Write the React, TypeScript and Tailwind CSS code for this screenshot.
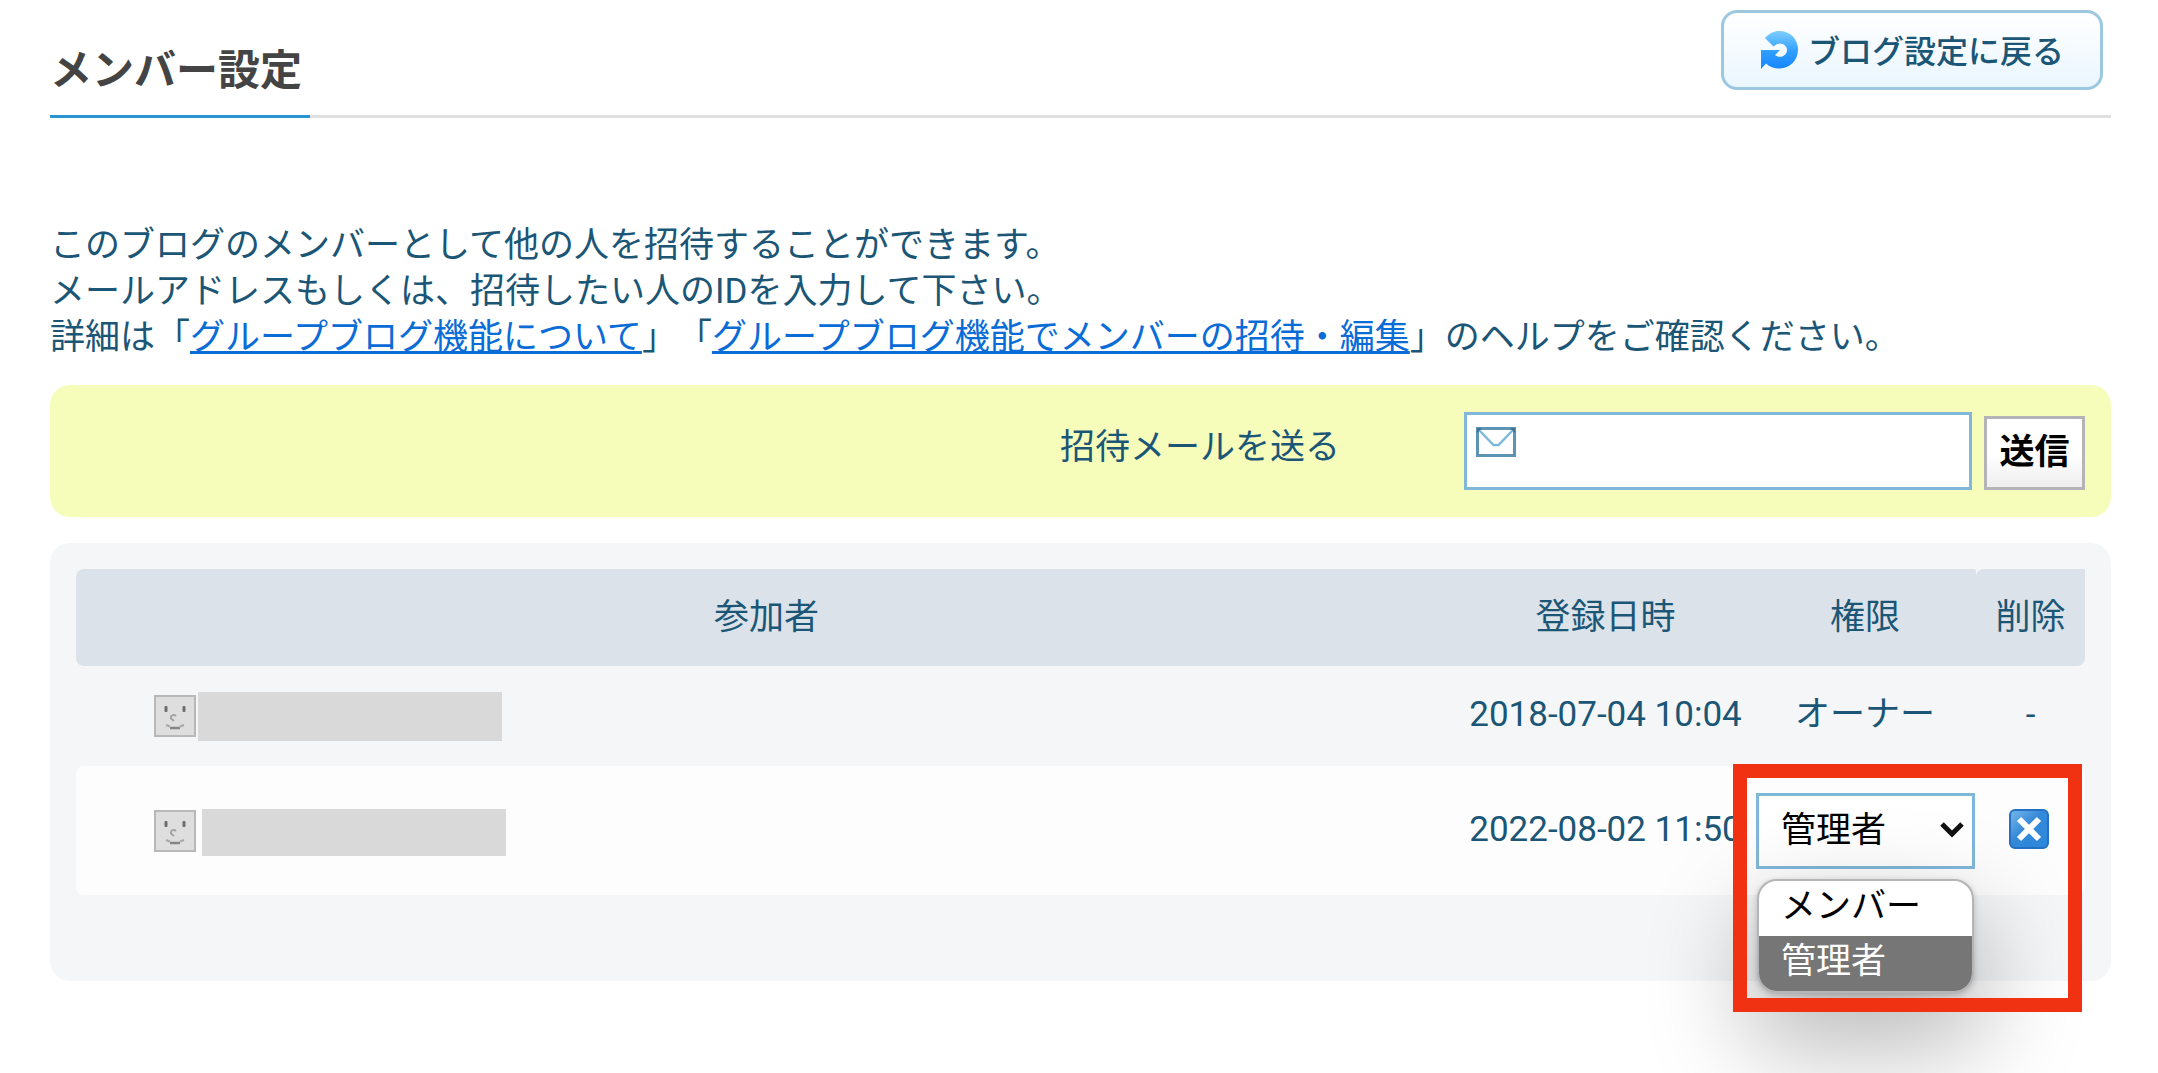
import { useState } from "react";

type Role = "member" | "admin";

const roles: { value: Role; label: string }[] = [
  { value: "member", label: "メンバー" },
  { value: "admin", label: "管理者" },
];

function BackIcon() {
  return (
    <svg width="38" height="38" viewBox="0 0 38 38" aria-hidden="true">
      <defs>
        <linearGradient id="back" x1="0" y1="0" x2="0" y2="1">
          <stop offset="0" stopColor="#7fcfff" />
          <stop offset="0.55" stopColor="#2f9dff" />
          <stop offset="1" stopColor="#1486ff" />
        </linearGradient>
      </defs>
      <path
        fill="url(#back)"
        d="M5 7C9 2.500 14 0 19.500 0C30 0 38 8 38 18.500C38 29 30 37.500 19.500 37.500C14 37.500 9.500 36 6 32.500L1 38V19H20L15 24C16.500 25.200 18 25.800 20 25.800C24 25.800 27 22.500 27 19C27 15.500 24 12.500 20 12.500C17.500 12.500 15.500 13.500 13.500 15.500Z"
      />
    </svg>
  );
}

function MailIcon() {
  return (
    <svg width="40" height="30" viewBox="0 0 40 30" aria-hidden="true">
      <defs>
        <linearGradient id="mail" x1="0" y1="0" x2="0" y2="1">
          <stop offset="0.5" stopColor="#ffffff" />
          <stop offset="1" stopColor="#e6e9ec" />
        </linearGradient>
      </defs>
      <rect x="1.500" y="1.500" width="37" height="27" fill="url(#mail)" stroke="#5d93b3" strokeWidth="3" />
      <path d="M3 3L17.500 18H22.500L37 3" fill="none" stroke="#7fb9da" strokeWidth="2.500" />
      <path d="M1 1H6L1 6ZM39 1H34L39 6Z" fill="#3f7695" />
    </svg>
  );
}

function FaceIcon() {
  return (
    <svg width="42" height="42" viewBox="0 0 42 42" className="shrink-0" aria-hidden="true">
      <rect x="1" y="1" width="40" height="40" fill="#dedede" stroke="#b8b8b8" strokeWidth="2" />
      <rect x="10.500" y="11" width="3" height="6" rx="1" fill="#6e6e6e" />
      <rect x="28.500" y="11" width="3" height="6" rx="1" fill="#6e6e6e" />
      <path d="M22 21C20 19 16.500 20 17 23.500L20 26" fill="none" stroke="#a4a4a4" strokeWidth="2" />
      <path d="M12 30L16 31.500M26 31.500L30 30" fill="none" stroke="#a8a8a8" strokeWidth="2" />
      <path d="M16 33H26" fill="none" stroke="#858585" strokeWidth="2.500" />
    </svg>
  );
}

function DeleteIcon() {
  return (
    <svg width="40" height="40" viewBox="0 0 40 40" aria-hidden="true">
      <defs>
        <linearGradient id="delete" x1="0" y1="0" x2="1" y2="1">
          <stop offset="0" stopColor="#79b8ea" />
          <stop offset="0.45" stopColor="#3489d8" />
          <stop offset="1" stopColor="#2b87dc" />
        </linearGradient>
      </defs>
      <rect x="1" y="1" width="38" height="38" rx="5" fill="url(#delete)" stroke="#2470c4" strokeWidth="2" />
      <path d="M10 10L30 30M30 10L10 30" stroke="#ffffff" strokeWidth="6" />
    </svg>
  );
}

export default function App() {
  const [mail, setMail] = useState("");
  const [role, setRole] = useState<Role>("admin");

  return (
    <main className="min-h-screen overflow-hidden bg-white pt-[10px] pr-[47px] pb-20 pl-[50px] font-['Roboto','Noto_Sans_CJK_JP',sans-serif] text-[35px] leading-[46px] text-[#1b5676]">
      {/* Page title */}
      <header className="flex items-stretch">
        <h1 className="w-[260px] border-b-3 border-[#2a93d1] pt-[34px] text-[42px] leading-[54px] font-bold whitespace-nowrap text-[#444444]">
          メンバー設定
        </h1>
        <div className="flex flex-1 justify-end border-b-3 border-[#e0e0e0] pr-2 pb-[25px]">
          <a
            href="#settings"
            className="flex h-20 items-center gap-2.5 rounded-2xl border-3 border-[#9cc7e0] bg-linear-to-b from-white to-[#eaf6ff] pr-9 pl-9 text-[32px] font-medium"
          >
            <BackIcon />
            <span className="pt-1">ブログ設定に戻る</span>
          </a>
        </div>
      </header>

      <p className="mt-[105px] [text-spacing-trim:space-all]">
        このブログのメンバーとして他の人を招待することができます。
        <br />
        メールアドレスもしくは、招待したい人のIDを入力して下さい。
        <br />
        詳細は「
        <a href="#about" className="text-[#0a6cd6] underline">
          グループブログ機能について
        </a>
        」「
        <a href="#invite" className="text-[#0a6cd6] underline">
          グループブログ機能でメンバーの招待・編集
        </a>
        」のヘルプをご確認ください。
      </p>

      {/* Invitation */}
      <form
        className="mt-6 flex items-end justify-end gap-3 rounded-[20px] bg-[#f6fdbb] px-[26px] py-[27px]"
        onSubmit={(e) => e.preventDefault()}
      >
        <label htmlFor="mail" className="mr-28 self-center pb-1.5">
          招待メールを送る
        </label>
        <div className="relative">
          <input
            id="mail"
            type="text"
            value={mail}
            onChange={(e) => setMail(e.target.value)}
            className="block h-[78px] w-[508px] border-3 border-[#80b8d9] bg-white pr-3 pl-16 outline-none"
          />
          <span className="pointer-events-none absolute top-[15px] left-3">
            <MailIcon />
          </span>
        </div>
        <button
          type="submit"
          className="h-[74px] w-[101px] border-3 border-[#b3b3b8] bg-linear-to-b from-white from-50% to-[#eeeeee] font-bold text-black"
        >
          送信
        </button>
      </form>

      {/* Members */}
      <section className="mt-[26px] rounded-[20px] bg-[#f4f6f8] px-[26px] pt-[26px] pb-[86px]">
        <table className="w-full table-fixed border-separate border-spacing-0 text-center">
          <thead>
            <tr className="h-[97px]">
              <th className="rounded-l-lg bg-[#dbe2e9] font-normal">参加者</th>
              <th className="w-[297px] bg-[#dbe2e9] font-normal">登録日時</th>
              <th className="w-[222px] rounded-tr-xs bg-[#dbe2e9] font-normal">権限</th>
              <th className="w-[109px] rounded-tl-lg rounded-br-lg bg-[#dbe2e9] font-normal">
                削除
              </th>
            </tr>
          </thead>
          <tbody>
            <tr className="h-[100px]">
              <td className="pl-[78px]">
                <div className="flex items-center gap-0.5">
                  <FaceIcon />
                  <span className="h-[49px] w-[304px] bg-[#d9d9d9]" />
                </div>
              </td>
              <td className="pb-0.5 whitespace-nowrap">2018-07-04 10:04</td>
              <td className="pb-0.5">オーナー</td>
              <td className="pb-0.5">-</td>
            </tr>
            <tr className="h-[129px]">
              <td className="rounded-l-lg bg-[#fdfdfd] pl-[78px]">
                <div className="flex items-end gap-1.5">
                  <FaceIcon />
                  <span className="-mb-1 h-[47px] w-[304px] bg-[#d9d9d9]" />
                </div>
              </td>
              <td className="bg-[#fdfdfd] pb-0.5 whitespace-nowrap">2022-08-02 11:50</td>
              <td className="relative bg-[#fdfdfd]">
                <div className="relative mr-px ml-0.5">
                  <select
                    aria-label="権限"
                    value={role}
                    onChange={(e) => setRole(e.target.value as Role)}
                    className="block h-[76px] w-full appearance-none border-3 border-[#80b8d9] bg-white pl-[22px] text-black outline-none"
                  >
                    {roles.map((item) => (
                      <option key={item.value} value={item.value}>
                        {item.label}
                      </option>
                    ))}
                  </select>
                  <svg
                    width="26"
                    height="18"
                    viewBox="0 0 26 18"
                    className="pointer-events-none absolute top-7 right-2.5"
                    aria-hidden="true"
                  >
                    <path d="M3 3L13 13L23 3" fill="none" stroke="#111111" strokeWidth="5" />
                  </svg>
                </div>
                {/* Open list */}
                <ul
                  role="listbox"
                  className="absolute top-[113px] right-0.5 left-[3px] z-10 overflow-hidden rounded-[20px] border-2 border-[#b5b5b5] bg-white text-left text-black shadow-[0_2px_6px_rgba(0,0,0,0.2),0_44px_100px_10px_rgba(0,0,0,0.28)]"
                >
                  {roles.map((item) => (
                    <li
                      key={item.value}
                      role="option"
                      aria-selected={item.value === role}
                      onClick={() => setRole(item.value)}
                      className="h-[55px] cursor-pointer pl-[22px] leading-[52px] aria-selected:bg-[#767676] aria-selected:text-white"
                    >
                      {item.label}
                    </li>
                  ))}
                </ul>
                {/* Highlight frame */}
                <div className="pointer-events-none absolute -top-0.5 -left-[21px] z-20 h-[248px] w-[349px] border-14 border-[#f13212]" />
              </td>
              <td className="rounded-r-lg bg-[#fdfdfd] pr-1 pb-1">
                <button type="button" aria-label="削除" className="mx-auto block">
                  <DeleteIcon />
                </button>
              </td>
            </tr>
          </tbody>
        </table>
      </section>
    </main>
  );
}
